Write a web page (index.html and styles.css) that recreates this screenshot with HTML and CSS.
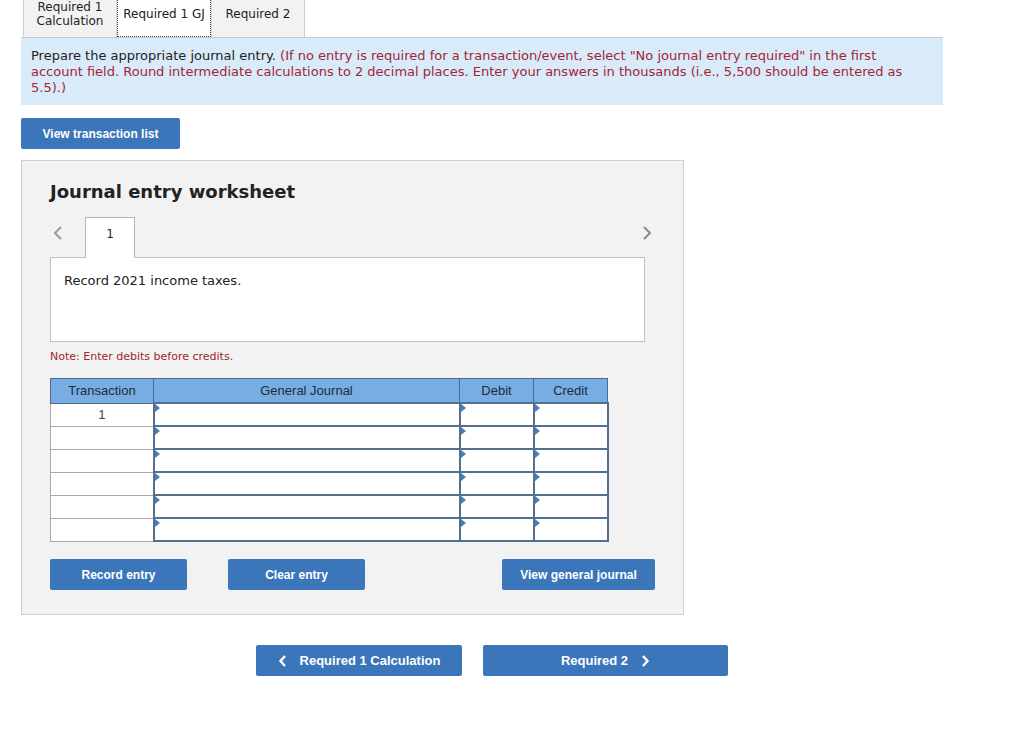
FILE: index.html
```html
<!DOCTYPE html>
<html lang="en">
<head>
    <meta charset="UTF-8">
    <title>Journal entry worksheet</title>
    <link rel="stylesheet" href="styles.css">
</head>
<body>
    <div class="page">
        <div class="tabs">
            <div class="tab">Required 1<br>Calculation</div>
            <div class="tab active">Required 1 GJ</div>
            <div class="tab">Required 2</div>
        </div>

        <div class="instructions">
            Prepare the appropriate journal entry. <span class="hint">(If no entry is required for a transaction/event, select "No journal entry required" in the first account field. Round intermediate calculations to 2 decimal places. Enter your answers in thousands (i.e., 5,500 should be entered as 5.5).)</span>
        </div>

        <button class="btn list-btn">View transaction list</button>

        <div class="worksheet">
            <h2>Journal entry worksheet</h2>

            <div class="entry-nav">
                <svg class="chev" width="10" height="16" viewBox="0 0 10 16"><polyline points="8,2 2,8 8,14" fill="none" stroke="#9a9a9a" stroke-width="2"/></svg>
                <div class="entry-tab">1</div>
                <svg class="chev right" width="10" height="16" viewBox="0 0 10 16"><polyline points="2,2 8,8 2,14" fill="none" stroke="#8a8a8a" stroke-width="2"/></svg>
            </div>
            <div class="description">Record 2021 income taxes.</div>

            <p class="note">Note: Enter debits before credits.</p>

            <table class="journal">
                <thead>
                    <tr>
                        <th class="c-trans">Transaction</th>
                        <th class="c-gj">General Journal</th>
                        <th class="c-dr">Debit</th>
                        <th class="c-cr">Credit</th>
                    </tr>
                </thead>
                <tbody>
                    <tr><td class="trans">1</td><td class="field"></td><td class="field"></td><td class="field"></td></tr>
                    <tr><td class="trans"></td><td class="field"></td><td class="field"></td><td class="field"></td></tr>
                    <tr><td class="trans"></td><td class="field"></td><td class="field"></td><td class="field"></td></tr>
                    <tr><td class="trans"></td><td class="field"></td><td class="field"></td><td class="field"></td></tr>
                    <tr><td class="trans"></td><td class="field"></td><td class="field"></td><td class="field"></td></tr>
                    <tr><td class="trans"></td><td class="field"></td><td class="field"></td><td class="field"></td></tr>
                </tbody>
            </table>

            <div class="actions">
                <button class="btn record">Record entry</button>
                <button class="btn clear">Clear entry</button>
                <button class="btn view-gj">View general journal</button>
            </div>
        </div>

        <div class="bottom-nav">
            <button class="btn nav-btn prev">
                <svg width="10" height="14" viewBox="0 0 10 14"><polyline points="7,2 2.5,7 7,12" fill="none" stroke="#fff" stroke-width="2.4"/></svg>
                <span>Required 1 Calculation</span>
            </button>
            <button class="btn nav-btn next">
                <span>Required 2</span>
                <svg width="10" height="14" viewBox="0 0 10 14"><polyline points="3,2 7.5,7 3,12" fill="none" stroke="#fff" stroke-width="2.4"/></svg>
            </button>
        </div>
    </div>
</body>
</html>
```

FILE: styles.css
```css
body {
    margin: 0;
    background: #fff;
    font-family: "DejaVu Sans", Verdana, sans-serif;
    color: #222;
}
.page {
    padding-left: 21px;
    width: 922px;
}
.tabs {
    display: flex;
    height: 37px;
    padding-left: 2px;
    border-bottom: 1px solid #c4c9cf;
}
.tab {
    width: 94px;
    box-sizing: border-box;
    padding-bottom: 9px;
    display: flex;
    align-items: center;
    justify-content: center;
    text-align: center;
    font-size: 12px;
    line-height: 14px;
    background: #f2f2f2;
    border-left: 1px solid #cfcfcf;
    border-right: 1px solid #cfcfcf;
}
.tab.active {
    background: #fff;
    border: 1px dotted #444;
    border-top: none;
}
.instructions {
    background: #d9ebf8;
    padding: 10px 20px 9px 10px;
    font-size: 13px;
    line-height: 16px;
}
.hint {
    color: #a3243a;
}
.btn {
    border: none;
    border-radius: 2px;
    background: #3b76ba;
    color: #fff;
    font-family: "Liberation Sans", Arial, sans-serif;
    font-weight: bold;
    font-size: 12px;
    height: 31px;
    cursor: pointer;
}
.list-btn {
    display: block;
    width: 159px;
    margin-top: 13px;
}
.worksheet {
    margin-top: 11px;
    width: 663px;
    box-sizing: border-box;
    background: #f2f2f2;
    border: 1px solid #cfcfcf;
    padding: 19px 0 24px 28px;
}
.worksheet h2 {
    margin: 0;
    font-size: 18px;
    line-height: 24px;
}
.entry-nav {
    display: flex;
    align-items: flex-end;
    margin-top: 12px;
    width: 602px;
    height: 41px;
}
.chev {
    margin: 0 0 16px 3px;
}
.chev.right {
    margin-left: auto;
}
.entry-tab {
    width: 50px;
    height: 41px;
    box-sizing: border-box;
    margin-left: 22px;
    margin-bottom: -1px;
    background: #fff;
    border: 1px solid #b5b5b5;
    border-bottom: none;
    text-align: center;
    font-size: 12px;
    padding-top: 9px;
    position: relative;
    z-index: 1;
}
.description {
    width: 595px;
    height: 85px;
    box-sizing: border-box;
    background: #fff;
    border: 1px solid #c2c2c2;
    padding: 15px 13px;
    font-size: 13px;
}
.note {
    margin: 8px 0 0;
    font-size: 11px;
    line-height: 14px;
    color: #9a2a2a;
}
.journal {
    margin-top: 14px;
    border-collapse: collapse;
    table-layout: fixed;
    font-family: "Liberation Sans", Arial, sans-serif;
    font-size: 13px;
}
.journal th {
    height: 23px;
    padding: 0;
    background: #78ade3;
    border: 1px solid #4c6a8a;
    font-weight: normal;
    color: #1c2b3a;
}
.c-trans { width: 102px; }
.c-gj { width: 305px; }
.c-dr { width: 73px; }
.c-cr { width: 73px; }
.journal td {
    height: 21px;
    padding: 0;
    background: #fff;
}
.journal .trans {
    border: 1px solid #a9a9a9;
    text-align: center;
    vertical-align: top;
    color: #444;
    padding-top: 3px;
    height: 18px;
}
.journal .field {
    border: 2px solid #52708f;
    position: relative;
}
.journal .field::before {
    content: '';
    position: absolute;
    top: 0;
    left: 0;
    border-top: 4px solid transparent;
    border-bottom: 4px solid transparent;
    border-left: 5px solid #4a7cb6;
}
.actions {
    display: flex;
    margin-top: 17px;
    width: 605px;
}
.actions .record {
    width: 137px;
    margin-right: 41px;
}
.actions .clear {
    width: 137px;
}
.actions .view-gj {
    width: 153px;
    margin-left: auto;
}
.bottom-nav {
    display: flex;
    gap: 21px;
    margin: 30px 0 0 235px;
}
.nav-btn {
    display: flex;
    align-items: center;
    justify-content: center;
    gap: 12px;
    font-size: 13px;
}
.nav-btn.prev {
    width: 206px;
}
.nav-btn.next {
    width: 245px;
}
```
